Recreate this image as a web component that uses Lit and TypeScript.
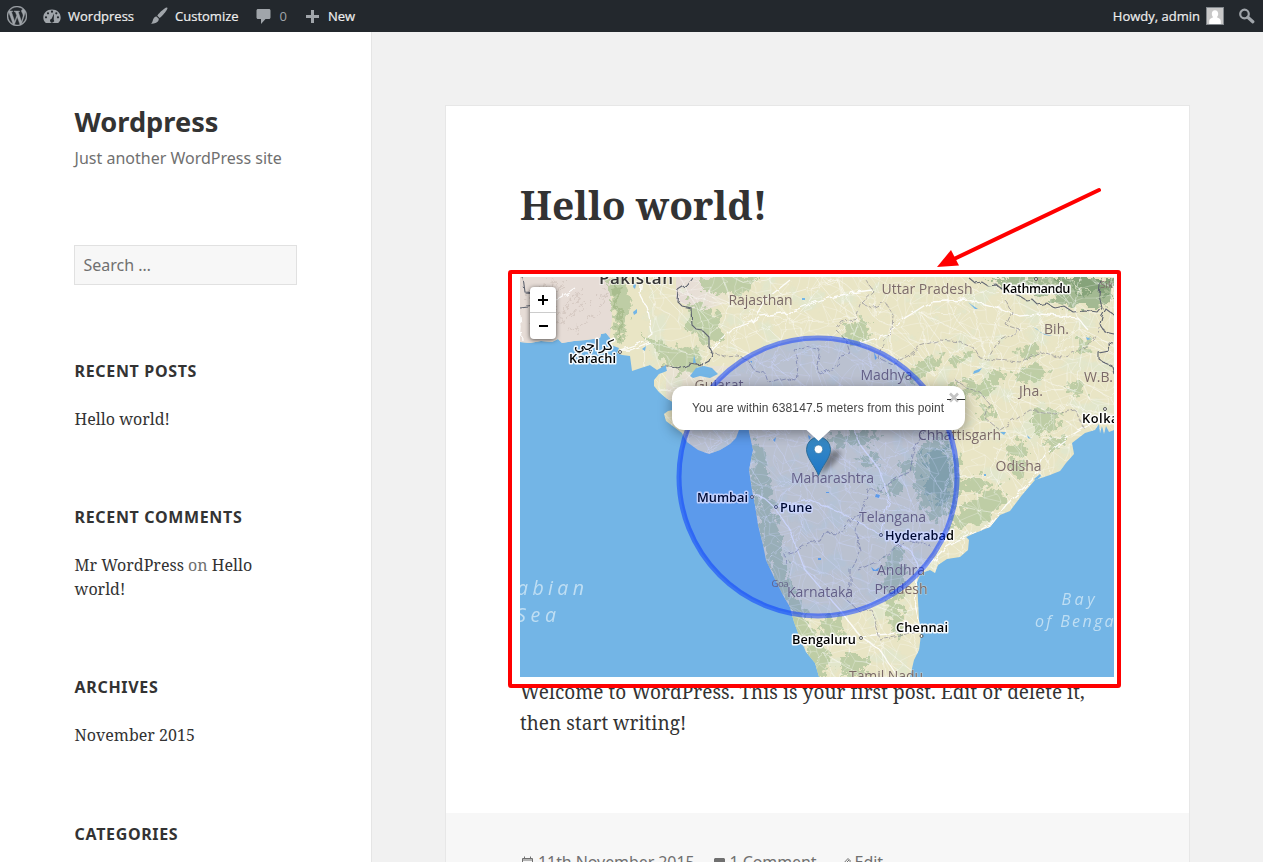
import { LitElement, html, svg, css } from "lit";
import { customElement } from "lit/decorators.js";

const LAND =
  "M520 277V342L530 343L541 341L552 342L558 339L562 343L574 341L586 340L600 338L601 334L606 333L610 338L611 345L619 348L617 353L622 355L630 356L632 371L641 368L650 365L657 370L666 365L667 371L659 374L654 380L654 386L659 392L666 398L674 403L690 404L678 409L668 411L664 414L666 421L674 427L682 433L687 442L698 450L709 454L720 450L730 444L736 438L739 430V415L747 415L749 432L753 450L749 470L752 490L755 505L758 525L763 545L766 560L773 575L783 595L790 607L794 622L800 638L806 652L815 663L819 677H910L914 660L919 650L921 635L919 620L918 600L917 582L921 573L930 570L935 573L938 565L947 559L960 557L968 550L969 540L966 537L975 533L990 527L1000 515L1010 511L1022 495L1035 480L1050 475L1060 471L1066 463L1074 454L1072 443L1085 433L1095 430L1099 424L1100 433L1102 426L1104 434L1106 426L1109 432L1114 430V277Z";

type Point = [number, number];

/** Deterministic pseudo random numbers, so that the road mesh is stable. */
function seeded(seed: number) {
  return () => {
    seed = (seed * 1664525 + 1013904223) >>> 0;
    return seed / 4294967296;
  };
}

function roadMesh(cell: number, seed: number, keep: number): string {
  const rnd = seeded(seed);
  const cols = Math.ceil(470 / cell) + 1;
  const rows = Math.ceil(420 / cell) + 1;
  const pts: Point[][] = [];
  for (let r = 0; r < rows; r++) {
    pts.push([]);
    for (let c = 0; c < cols; c++) {
      pts[r].push([
        Math.round(655 + c * cell + (rnd() - 0.5) * cell * 1.3),
        Math.round(268 + r * cell + (rnd() - 0.5) * cell * 1.3),
      ]);
    }
  }
  let d = "";
  const link = (a: Point, b: Point) => {
    if (rnd() > keep) return;
    const mx = (a[0] + b[0]) / 2 + (rnd() - 0.5) * cell * 0.4;
    const my = (a[1] + b[1]) / 2 + (rnd() - 0.5) * cell * 0.4;
    d += `M${a[0]} ${a[1]}Q${mx.toFixed(1)} ${my.toFixed(1)} ${b[0]} ${b[1]}`;
  };
  for (let r = 0; r < rows - 1; r++) {
    for (let c = 0; c < cols - 1; c++) {
      link(pts[r][c], pts[r][c + 1]);
      link(pts[r][c], pts[r + 1][c]);
      if (rnd() > 0.6) link(pts[r][c], pts[r + 1][c + 1]);
    }
  }
  return d;
}

const MINOR_ROADS = roadMesh(10, 7, 0.72);
const MAJOR_ROADS = roadMesh(31, 21, 0.75);

const FORESTS: string[] = [
  "M606 277L622 277L632 300L626 330L620 345L614 330L612 300Z",
  "M640 330L665 345L700 350L705 368L680 372L660 360Z",
  "M690 300L715 312L722 340L705 345L688 330Z",
  "M700 277H760L750 290L720 296L700 290Z",
  "M844 325L858 318L872 325L868 340L850 345Z",
  "M752 440L762 446L768 470L774 510L784 560L798 600L812 628L828 645L826 677H818L800 640L780 590L766 555L754 490Z",
  "M825 435L880 430L870 445L838 447Z",
  "M925 442L950 440L962 470L956 505L935 520L918 500L912 470Z",
  "M885 555L900 545L906 575L896 610L884 590Z",
  "M960 512L980 495L1000 484L1008 496L990 518L962 530L950 524Z",
  "M958 482L980 474L990 484L972 494L956 494Z",
  "M950 384L985 380L996 390L975 398L958 402Z",
  "M986 372L1004 370L1006 380L990 384Z",
  "M1010 372L1036 364L1050 372L1038 380L1022 384Z",
  "M1034 412L1050 406L1062 418L1048 436L1034 430Z",
  "M1004 446L1024 440L1030 452L1012 458Z",
  "M1044 440L1060 434L1066 444L1050 454Z",
  "M982 404L994 408L990 420L980 416Z",
  "M1064 384L1082 380L1084 392L1070 396Z",
  "M1006 460L1024 460L1030 472L1014 478Z",
  "M896 377L930 358L946 354L940 364L920 380Z",
  "M950 358L970 350L972 358L956 366Z",
  "M1014 350L1036 346L1040 354L1024 360Z",
  "M1080 340L1092 338L1090 352L1080 356Z",
  "M856 460L872 452L880 462L866 470Z",
  "M880 486L900 480L904 492L888 496Z",
  "M898 462L912 458L914 470L900 474Z",
  "M818 620L845 615L842 635L826 640Z",
  "M888 606L900 600L904 630L894 640Z",
  "M840 655L866 655L866 677H842Z",
];

const BORDERS: string[] = [
  "M523 277L525 292L536 293V306L520 308",
  "M692 277L686 285L678 290L677 301L682 306L691 308L692 325L697 330L703 331L709 337L709 347L713 355L710 362L703 366L690 364L679 369L668 366L660 366",
  "M968 277L975 283L982 282L988 286L997 285L1003 290L1012 292L1018 295L1026 300L1032 299L1038 305L1047 303L1055 308L1064 306L1073 312L1085 311L1098 313L1102 308L1099 295L1101 277",
  "M1114 315L1106 309L1102 316L1100 324L1105 332L1114 334",
  "M1114 344L1108 343L1109 351L1099 353L1099 359L1105 363L1112 366L1114 374",
];

const STATES: string[] = [
  "M710 352L725 357L738 356L748 360L754 370L765 373L768 382L785 378L796 381L798 366L795 350L806 346L820 350L817 365L820 374L838 366L840 355L850 353L846 340L836 330L842 322L856 318L862 303L874 292L866 280",
  "M862 303L872 308L885 302L893 315L892 330L882 345L878 358L892 364L908 356L920 346L940 340L960 342L975 349L980 358L996 360L1020 362L1040 352L1060 358L1080 350L1094 340L1102 325",
  "M786 564L785 554L798 550L808 543L820 541L824 533L838 534L852 518L862 514L866 500L868 490L880 490L900 476L910 472L914 450L925 430",
  "M862 515L855 530L860 550L850 570L850 584L847 600L860 612L872 610L880 640L900 636L918 630",
  "M1005 300L1012 312L1006 325L1020 330L998 342L990 355",
  "M955 380L970 390L980 392L990 405L985 418L1000 430L1030 410L1055 414L1075 410L1085 430",
  "M858 570L880 560L895 548L910 540L930 545",
];

const HIGHWAYS: string[] = [
  "M520 315L522 340M540 324L548 305L575 288",
  "M620 350L640 343L652 334L648 310L640 295L642 277",
  "M620 350L630 350L650 342",
  "M710 350L730 330L752 322L760 316L790 312L820 300L850 293L872 290",
  "M752 322L765 300L790 280M860 343L887 335L905 318L930 302L968 300L1000 308L1020 316L1040 314L1078 318L1088 330",
  "M774 507L763 497L751 494M774 507L790 530L805 570L840 610L860 636L880 650L900 680",
  "M860 636L890 634L921 630L914 600L918 575L945 548L968 536L992 524L1006 505L1032 480L1045 455L1070 436L1098 420",
  "M774 507L810 500L845 515L880 534L910 550L920 570",
  "M880 534L890 500L880 470L860 445L850 420",
];

interface Label {
  text: string;
  x: number;
  y: number;
  kind: string;
  width?: number;
}

const LABELS: Label[] = [
  { text: "Pakistan", x: 599, y: 283.5, kind: "country", width: 74 },
  { text: "Rajasthan", x: 728.5, y: 305, kind: "state", width: 64 },
  { text: "Uttar Pradesh", x: 881.5, y: 294, kind: "state", width: 91 },
  { text: "Bih.", x: 1044, y: 334, kind: "state", width: 25 },
  { text: "Jha.", x: 1019, y: 395.5, kind: "state", width: 24 },
  { text: "W.B.", x: 1084, y: 382, kind: "state", width: 29 },
  { text: "Sik", x: 1100, y: 287.5, kind: "small", width: 13 },
  { text: "Gujarat", x: 694.5, y: 390, kind: "state", width: 49 },
  { text: "Madhya", x: 860.5, y: 380, kind: "state", width: 52 },
  { text: "Chhattisgarh", x: 918, y: 440, kind: "state", width: 83 },
  { text: "Odisha", x: 995.5, y: 471, kind: "state", width: 46 },
  { text: "Maharashtra", x: 791, y: 482.5, kind: "state", width: 83 },
  { text: "Telangana", x: 859, y: 521.5, kind: "state", width: 67 },
  { text: "Andhra", x: 877, y: 574.5, kind: "state", width: 48 },
  { text: "Pradesh", x: 874.5, y: 594, kind: "state", width: 53 },
  { text: "Goa", x: 771.5, y: 586.5, kind: "small", width: 17 },
  { text: "Karnataka", x: 787, y: 597, kind: "state", width: 66 },
  { text: "Tamil Nadu", x: 849, y: 680.5, kind: "state", width: 74 },
  { text: "کراچي", x: 574, y: 350, kind: "arabic" },
  { text: "Karachi", x: 569, y: 363, kind: "city", width: 47 },
  { text: "Kathmandu", x: 1002.5, y: 293, kind: "city", width: 68 },
  { text: "Kolkata", x: 1082, y: 422.5, kind: "city", width: 50 },
  { text: "Mumbai", x: 697, y: 501.5, kind: "city", width: 51 },
  { text: "Pune", x: 780, y: 511.5, kind: "city", width: 32 },
  { text: "Hyderabad", x: 885, y: 540, kind: "city", width: 69 },
  { text: "Chennai", x: 896, y: 632, kind: "city", width: 52 },
  { text: "Bengaluru", x: 792, y: 643.5, kind: "city", width: 64 },
  { text: "abian", x: 517, y: 595, kind: "sea", width: 67 },
  { text: "Sea", x: 516, y: 622, kind: "sea", width: 40 },
  { text: "Bay", x: 1061.5, y: 605, kind: "bay", width: 33 },
  { text: "of Bengal", x: 1035, y: 627, kind: "bay", width: 85 },
];

const TOWNS: Point[] = [
  [620, 352],
  [1036, 279],
  [1105, 409],
  [752, 497],
  [776, 507],
  [881, 535],
  [921.5, 636],
  [861, 638],
];

const LAKES: string[] = [
  "M633 312l4-3v4l-3 2zM634 283l2 2-1 4-2-2zM642 349l4-3-1 5z",
  "M690 376l6-8 8-2 8 2 6 6-8 4-10-2-7 2z",
  "M694 355l2 8h-3zM808 435l3 2-2 3zM874 352l3 6-2 2zM876 494l4 1-1 3-4-1zM818 558l3 0v2h-3z",
  "M968 302l4 3 6 4-3 0zM1033 327l4 2 4 4 12 3-8-1zM974 371l8-3-3 4-6 2zM1000 432h6l-2 3zM1027 435l4 4-3-1zM871 567l4 3 5-3-2 4-5 0z",
  "M773 440l3-3-1 5zM1034 479l6-5 1 2-5 5zM802 298l3 0v2h-3zM826 492h3v1h-3zM984 474h2v2h-2zM750 361l2 0v2zM1086 337l5 2-4 1z",
];

@customElement("area-map")
class AreaMap extends LitElement {
  static styles = css`
    :host {
      display: block;
      position: relative;
      width: 594px;
      height: 400px;
      font-family: "Liberation Sans", Arial, sans-serif;
    }
    .tiles {
      display: block;
      width: 594px;
      height: 400px;
    }
    text {
      font-family: "Open Sans", "Noto Sans", sans-serif;
    }
    .state {
      font-size: 14px;
      fill: #7b6a68;
      stroke: rgba(240, 235, 215, 0.5);
      stroke-width: 1.2px;
      paint-order: stroke;
    }
    .small {
      font-size: 9.5px;
      fill: #7a6a68;
    }
    .country {
      font-size: 17px;
      font-weight: 600;
      fill: #333;
      stroke: rgba(255, 255, 255, 0.6);
      stroke-width: 2px;
      paint-order: stroke;
    }
    .city,
    .arabic {
      font-size: 12.8px;
      font-weight: 600;
      fill: #000;
      stroke: rgba(255, 255, 255, 0.9);
      stroke-width: 3px;
      stroke-linejoin: round;
      paint-order: stroke;
    }
    .arabic {
      font-family: "DejaVu Sans", sans-serif;
      font-weight: 400;
      font-size: 14.5px;
    }
    .sea {
      font-size: 19.5px;
      font-style: italic;
      fill: #bfdef3;
    }
    .bay {
      font-size: 16px;
      font-style: italic;
      fill: #bfdef3;
    }
    .zoom {
      position: absolute;
      left: 10px;
      top: 10px;
      width: 26px;
      border-radius: 4px;
      background: #fff;
      box-shadow: 0 1px 5px rgba(0, 0, 0, 0.65);
    }
    .zoom svg {
      display: block;
      width: 26px;
      height: 26px;
    }
    .zoom svg:first-child {
      border-bottom: 1px solid #ccc;
      height: 25px;
    }
    .popup {
      position: absolute;
      left: 152px;
      top: 109px;
      width: 293px;
      height: 44px;
      box-sizing: border-box;
      padding-left: 20px;
      border-radius: 12px;
      background: #fff;
      box-shadow: 0 3px 14px rgba(0, 0, 0, 0.4);
      color: #444;
      font-size: 12px;
      line-height: 44px;
      letter-spacing: 0.115px;
      white-space: nowrap;
    }
    .overlay {
      position: absolute;
      left: 0;
      top: 0;
      pointer-events: none;
    }
  `;

  render() {
    return html`
      <svg class="tiles" viewBox="520 277 594 400">
        <defs>
          <clipPath id="land"><path d=${LAND} /></clipPath>
          <filter id="soft" x="-20%" y="-20%" width="140%" height="140%">
            <feTurbulence type="fractalNoise" baseFrequency="0.12" numOctaves="4" seed="4" result="n" />
            <feDisplacementMap in="SourceGraphic" in2="n" scale="22" xChannelSelector="R" yChannelSelector="G" result="d" />
            <feGaussianBlur in="d" stdDeviation="0.6" />
          </filter>
          <filter id="patches" x="0" y="0" width="100%" height="100%">
            <feTurbulence type="fractalNoise" baseFrequency="0.045" numOctaves="5" seed="11" />
            <feColorMatrix
              values="0 0 0 0 0.74  0 0 0 0 0.8  0 0 0 0 0.62  6 0 0 0 -3.3"
            />
          </filter>
          <filter id="wobble" x="-5%" y="-5%" width="110%" height="110%">
            <feTurbulence type="fractalNoise" baseFrequency="0.12" numOctaves="2" seed="9" />
            <feDisplacementMap in="SourceGraphic" scale="6" />
          </filter>
          <linearGradient id="arid" x1="0" x2="1">
            <stop offset="0" stop-color="#e6dcd6" />
            <stop offset="0.5" stop-color="#e8e0d6" />
            <stop offset="1" stop-color="#e8e0d6" stop-opacity="0" />
          </linearGradient>
        </defs>
        <rect x="520" y="277" width="594" height="400" fill="#73b5e6" />
        <g clip-path="url(#land)">
          <rect x="520" y="277" width="594" height="400" fill="#e9e5c5" />
          <path d="M520 277H610L612 320L608 350H520Z" fill="#e6dcd6" />
          <path d="M676 277H735V300L700 312L676 300Z" fill="url(#arid)" />
          <path d="M666 366L730 366V400H666Z" fill="#e8e2d2" />
          <rect x="640" y="277" width="474" height="400" filter="url(#patches)" opacity="0.7" />
          <g filter="url(#soft)" fill="#b7c99f" opacity="0.85">
            ${FORESTS.map((d) => svg`<path d=${d} />`)}
          </g>
          <g filter="url(#soft)">
            <path d="M985 277H1114V306L1095 308L1070 306L1045 296L1010 288Z" fill="#a3b992" />
            <path d="M1050 277H1114V288L1085 296Z" fill="#86a37a" />
            <path d="M1070 280L1090 292M1044 281L1064 292M1030 277L1040 288" stroke="#c3d0ae" stroke-width="2.500" />
            <path d="M926 450L946 448L954 475L944 505L926 495Z" fill="#96b394" opacity="0.7" />
            <path
              d="M530 290L560 284M524 300L548 296L566 286M536 330L570 318L590 300M530 322L562 310L582 292M575 330L596 312L606 290"
              stroke="#d6cac3"
              stroke-width="1.500"
              fill="none"
            />
            <path d="M614 280L618 310L622 335" stroke="#a9bd8e" stroke-width="4" fill="none" />
          </g>
          <g fill="none" stroke="#fff">
            <path d=${MINOR_ROADS} stroke-width="0.7" opacity="0.38" />
            <path d=${MAJOR_ROADS} stroke-width="0.9" opacity="0.5" filter="url(#wobble)" />
            <g filter="url(#wobble)">
              ${HIGHWAYS.map((d) => svg`<path d=${d} stroke-width="1.300" opacity="0.9" />`)}
            </g>
          </g>
          <g fill="none" stroke="#8f8d96" stroke-width="1" stroke-dasharray="5 1.5" opacity="0.7" filter="url(#wobble)">
            ${STATES.map((d) => svg`<path d=${d} />`)}
          </g>
          <g fill="none" stroke="#5f6470" stroke-width="1.1" filter="url(#wobble)">
            ${BORDERS.map((d) => svg`<path d=${d} />`)}
          </g>
          ${LAKES.map((d) => svg`<path d=${d} fill="#73b5e6" />`)}
        </g>
        ${LABELS.map((l) =>
          l.width
            ? svg`<text class=${l.kind} x=${l.x} y=${l.y} textLength=${l.width}>${l.text}</text>`
            : svg`<text class=${l.kind} x=${l.x} y=${l.y}>${l.text}</text>`
        )}
        ${TOWNS.map(
          ([x, y]) => svg`<circle cx=${x} cy=${y} r="1.5" fill="#fff" stroke="#555" stroke-width="1" />`
        )}
        <circle
          cx="818"
          cy="477"
          r="139"
          fill="#0033ff"
          fill-opacity="0.2"
          stroke="#0033ff"
          stroke-opacity="0.5"
          stroke-width="5"
        />
      </svg>

      <div class="zoom">
        <svg viewBox="0 0 26 25"><path d="M8 13h10M13 8v10" stroke="#000" stroke-width="2" /></svg>
        <svg viewBox="0 0 26 26"><path d="M9 13h9" stroke="#000" stroke-width="2" /></svg>
      </div>

      <svg class="overlay" width="594" height="400" viewBox="520 277 594 400">
        <defs>
          <linearGradient id="pin" x1="0" y1="0" x2="0" y2="1">
            <stop offset="0" stop-color="#3a8bc4" />
            <stop offset="1" stop-color="#1c76c8" />
          </linearGradient>
          <filter id="blur" x="-50%" y="-50%" width="200%" height="200%"><feGaussianBlur stdDeviation="2.500" /></filter>
        </defs>
        <path d="M819 475L826 456Q836 446 841 453Q838 463 819 475Z" fill="#000" opacity="0.38" filter="url(#blur)" />
        <path
          d="M818.500 475.500C815 466 806.500 458 806.500 449.500A12 12.500 0 0 1 830.500 449.500C830.500 458 822 466 818.500 475.500Z"
          fill="url(#pin)"
          stroke="#2e6c97"
          stroke-width="1"
        />
        <circle cx="818.500" cy="449.300" r="4.200" fill="#fff" stroke="#2e6c97" stroke-width="0.6" />
      </svg>

      <div class="popup">You are within 638147.5 meters from this point</div>
      <svg class="overlay" width="594" height="400" viewBox="520 277 594 400">
        <path d="M806 429.500H831L818.500 441Z" fill="#fff" />
        <path d="M950 393.500l8 8m0-8l-8 8" stroke="#c3c3c3" stroke-width="2.600" />
        <path d="M947 399.500h4m6 0h8" stroke="#333" stroke-width="1" />
      </svg>
    `;
  }
}

@customElement("admin-bar")
class AdminBar extends LitElement {
  static styles = css`
    :host {
      display: flex;
      justify-content: space-between;
      height: 32px;
      background: #23282d;
      color: #eee;
      font: 13px/32px "Open Sans", sans-serif;
    }
    .group,
    .item {
      display: flex;
      align-items: center;
    }
    .group {
      padding-left: 7px;
    }
    .right {
      padding: 0 8px 0 0;
    }
    svg {
      display: block;
      fill: #a0a5aa;
    }
    .site {
      margin-left: 15px;
      gap: 6px;
    }
    .customize {
      margin-left: 15px;
      gap: 6px;
    }
    .comments {
      margin-left: 16px;
      gap: 7px;
      color: #a0a5aa;
    }
    .new {
      margin-left: 18px;
      gap: 8px;
    }
    .avatar {
      margin: 0 14px 0 6px;
    }
    .label {
      -webkit-text-stroke: 0.2px currentColor;
    }
  `;

  render() {
    return html`
      <div class="group">
        <svg width="20" height="20" viewBox="0 0 24 24">
          <path
            stroke="#a0a5aa"
            stroke-width="0.5"
            d="M21.469 6.825c.84 1.537 1.318 3.3 1.318 5.175 0 3.979-2.156 7.456-5.363 9.325l3.295-9.527c.615-1.54.82-2.771.82-3.864 0-.405-.026-.78-.07-1.11m-7.981.105c.647-.03 1.232-.105 1.232-.105.582-.075.514-.93-.067-.899 0 0-1.755.135-2.88.135-1.064 0-2.85-.15-2.85-.15-.585-.03-.661.855-.075.885 0 0 .54.061 1.125.09l1.68 4.605-2.37 7.08L5.354 6.9c.649-.03 1.234-.1 1.234-.1.585-.075.516-.93-.065-.896 0 0-1.746.138-2.874.138-.2 0-.438-.008-.69-.015C4.911 3.15 8.235 1.215 12 1.215c2.809 0 5.365 1.072 7.286 2.833-.046-.003-.091-.009-.141-.009-1.06 0-1.812.923-1.812 1.914 0 .89.513 1.643 1.06 2.531.411.72.89 1.643.89 2.977 0 .915-.354 1.994-.821 3.479l-1.075 3.585-3.9-11.61.001.014zM12 22.784c-1.059 0-2.081-.153-3.048-.437l3.237-9.406 3.315 9.087c.024.053.05.101.078.149-1.12.393-2.325.609-3.582.609M1.211 12c0-1.564.336-3.05.935-4.39L7.29 21.709C3.694 19.96 1.212 16.271 1.211 12M12 0C5.385 0 0 5.385 0 12s5.385 12 12 12 12-5.385 12-12S18.615 0 12 0"
          />
        </svg>
        <div class="item site">
          <svg width="20" height="20" viewBox="0 0 20 20">
            <path
              fill-rule="evenodd"
              d="M3.800 17h12.400c1.700-1.400 2.500-3.300 2.500-5.500C18.700 6.800 14.900 3.400 10 3.400S1.300 6.800 1.300 11.500c0 2.200.8 4.100 2.500 5.500zM10 4.600a1.100 1.100 0 1 1 0 2.200 1.100 1.100 0 0 1 0-2.200zM6 6.200a1.100 1.100 0 1 1 0 2.200 1.100 1.100 0 0 1 0-2.200zm8.300 0a1.100 1.100 0 1 1 0 2.200 1.100 1.100 0 0 1 0-2.200zM4 10.200a1.100 1.100 0 1 1 0 2.200 1.100 1.100 0 0 1 0-2.200zm12 0a1.100 1.100 0 1 1 0 2.200 1.100 1.100 0 0 1 0-2.200zM12 7.600l-.3 5.800a2 2 0 1 1-2.100-.7z"
            />
          </svg>
          <span class="label">Wordpress</span>
        </div>
        <div class="item customize">
          <svg width="20" height="20" viewBox="0 0 20 20">
            <path
              d="M18.300 1.800c.5.500-.1 1.600-.7 2.500-1.700 2.600-5.200 6.700-7 7.700l-2.300-2.200C9.200 7.900 13 4.300 15.600 2.500c.9-.6 2.100-1.200 2.700-.7zM7.500 10.600l2.300 2.200c.3 1.900-1.200 3.300-3.300 4.200-1.600.7-3.600.9-5 .6 1.500-.6 1.900-1.700 2.300-3.200.5-1.900 1.700-3.700 3.700-3.800z"
            />
          </svg>
          <span class="label">Customize</span>
        </div>
        <div class="item comments">
          <svg width="18" height="20" viewBox="0 0 18 20">
            <path d="M3 3h11c.8 0 1.500.7 1.500 1.500v7c0 .8-.7 1.500-1.500 1.500h-3.500L6 18v-5H3c-.8 0-1.500-.7-1.500-1.500v-7C1.500 3.700 2.200 3 3 3z" />
          </svg>
          <span>0</span>
        </div>
        <div class="item new">
          <svg width="15" height="20" viewBox="0 0 15 20"><path d="M6 4h3v5h5v3H9v5H6v-5H1V9h5z" /></svg>
          <span class="label">New</span>
        </div>
      </div>
      <div class="group right">
        <span class="label">Howdy, admin</span>
        <svg class="avatar" width="18" height="18" viewBox="0 0 18 18">
          <rect width="18" height="18" fill="#82878c" />
          <rect x="1" y="1" width="16" height="16" fill="#c8c8c8" />
          <path d="M9 3.200c2 0 3.200 1.500 3.200 3.600 0 1.400-.6 2.700-1.400 3.400 2.400.8 4 1.800 4 4V17H3.200v-2.800c0-2.200 1.600-3.200 4-4-.8-.7-1.400-2-1.400-3.400 0-2.100 1.200-3.600 3.200-3.600z" fill="#fff" />
        </svg>
        <svg width="17" height="20" viewBox="0 0 17 20">
          <circle cx="6.500" cy="8" r="4.300" fill="none" stroke="#a0a5aa" stroke-width="2.200" />
          <path d="M9.800 11.300l5 4.500" stroke="#a0a5aa" stroke-width="3.200" stroke-linecap="round" />
        </svg>
      </div>
    `;
  }
}

@customElement("app-root")
class AppRoot extends LitElement {
  static styles = css`
    :host {
      display: block;
      position: relative;
      height: 862px;
      overflow: hidden;
      background: #f1f1f1;
      color: #333;
      font-family: "Noto Sans", sans-serif;
    }
    .page {
      display: flex;
      height: 830px;
    }
    .sidebar {
      flex: none;
      box-sizing: border-box;
      width: 372px;
      padding: 72px 74px 0;
      background: #fff;
      border-right: 1px solid #e5e5e5;
    }
    .site-title {
      margin: 0;
      padding-left: 0.6px;
      font-size: 27.2px;
      line-height: 36px;
      font-weight: 700;
    }
    .tagline {
      margin: 6px 0 75px;
      padding-left: 0.6px;
      font-size: 16px;
      line-height: 24px;
      color: #707070;
    }
    .search {
      box-sizing: border-box;
      width: 223px;
      height: 40px;
      padding-left: 8.5px;
      border: 1px solid #e1e1e1;
      background: #f7f7f7;
      color: #707070;
      font-size: 16px;
      line-height: 38px;
    }
    .widget {
      margin-top: 74px;
      padding-left: 0.6px;
    }
    .last {
      margin-top: 75px;
    }
    .widget h2 {
      margin: 0 0 24px;
      font-size: 16px;
      line-height: 24px;
      font-weight: 700;
      letter-spacing: 0.66px;
      text-transform: uppercase;
    }
    .widget p {
      margin: 0;
      font: 16px/24px "Noto Serif", "DejaVu Serif", serif;
    }
    .muted {
      color: #707070;
    }
    .content {
      flex: 1;
      padding: 73px 73px 0;
    }
    .card {
      box-sizing: border-box;
      width: 745px;
      border: 1px solid #e7e7e7;
      background: #fff;
    }
    .entry {
      padding: 75px 74px 74px;
    }
    .entry h1 {
      margin: 0 0 48px;
      font: 700 39px/48px "Noto Serif", "DejaVu Serif", serif;
    }
    .entry p {
      margin: 0;
      font: 19px/31px "Noto Serif", "DejaVu Serif", serif;
      letter-spacing: 0.04px;
      white-space: nowrap;
    }
    .meta {
      display: flex;
      padding: 37px 74px;
      background: #f7f7f7;
      color: #707070;
      font-size: 16px;
      line-height: 24px;
      letter-spacing: -0.08px;
    }
    .meta svg {
      display: block;
      width: 16px;
      height: 24px;
      margin-right: 2px;
      fill: none;
      stroke: #707070;
    }
    .meta span {
      margin-right: 17px;
    }
    .meta .replies {
      margin-right: 20px;
    }
    .annotation {
      position: absolute;
      left: 0;
      top: 0;
      pointer-events: none;
    }
  `;

  render() {
    return html`
      <admin-bar></admin-bar>
      <div class="page">
        <aside class="sidebar">
          <h1 class="site-title">Wordpress</h1>
          <p class="tagline">Just another WordPress site</p>
          <div class="search">Search …</div>
          <section class="widget">
            <h2>Recent Posts</h2>
            <p>Hello world!</p>
          </section>
          <section class="widget">
            <h2>Recent Comments</h2>
            <p>Mr WordPress <span class="muted">on</span> Hello<br />world!</p>
          </section>
          <section class="widget">
            <h2>Archives</h2>
            <p>November 2015</p>
          </section>
          <section class="widget last">
            <h2>Categories</h2>
          </section>
        </aside>
        <main class="content">
          <article class="card">
            <div class="entry">
              <h1>Hello world!</h1>
              <area-map></area-map>
              <p>Welcome to WordPress. This is your first post. Edit or delete it,<br />then start writing!</p>
            </div>
            <footer class="meta">
              <svg viewBox="0 0 16 24">
                <path d="M2.500 8.500h10v10h-10zM2.500 10h10M4.500 6.500v2M10.500 6.500v2" />
                <path d="M5 12.500h6" stroke-dasharray="1 1" />
              </svg>
              <span>11th November 2015</span>
              <svg viewBox="0 0 16 24">
                <path d="M3 8h9l1 1v6l-1 1H8l-3 3v-3H3l-1-1V9z" fill="#707070" stroke="none" />
              </svg>
              <span class="replies">1 Comment</span>
              <svg viewBox="0 0 16 24"><path d="M5 15l6-6.500 2.500 2.500L8 17l-3.500 1zM7 15l5-5" /></svg>
              <span>Edit</span>
            </footer>
          </article>
        </main>
      </div>
      <svg class="annotation" width="1263" height="862" viewBox="0 0 1263 862">
        <rect x="510" y="272" width="609" height="414" rx="1" fill="none" stroke="#f00" stroke-width="4" />
        <path d="M1099 190L953 259.500" stroke="#f00" stroke-width="4" stroke-linecap="round" />
        <path d="M937 267L951 250L959 265.500Z" fill="#f00" />
      </svg>
    `;
  }
}
